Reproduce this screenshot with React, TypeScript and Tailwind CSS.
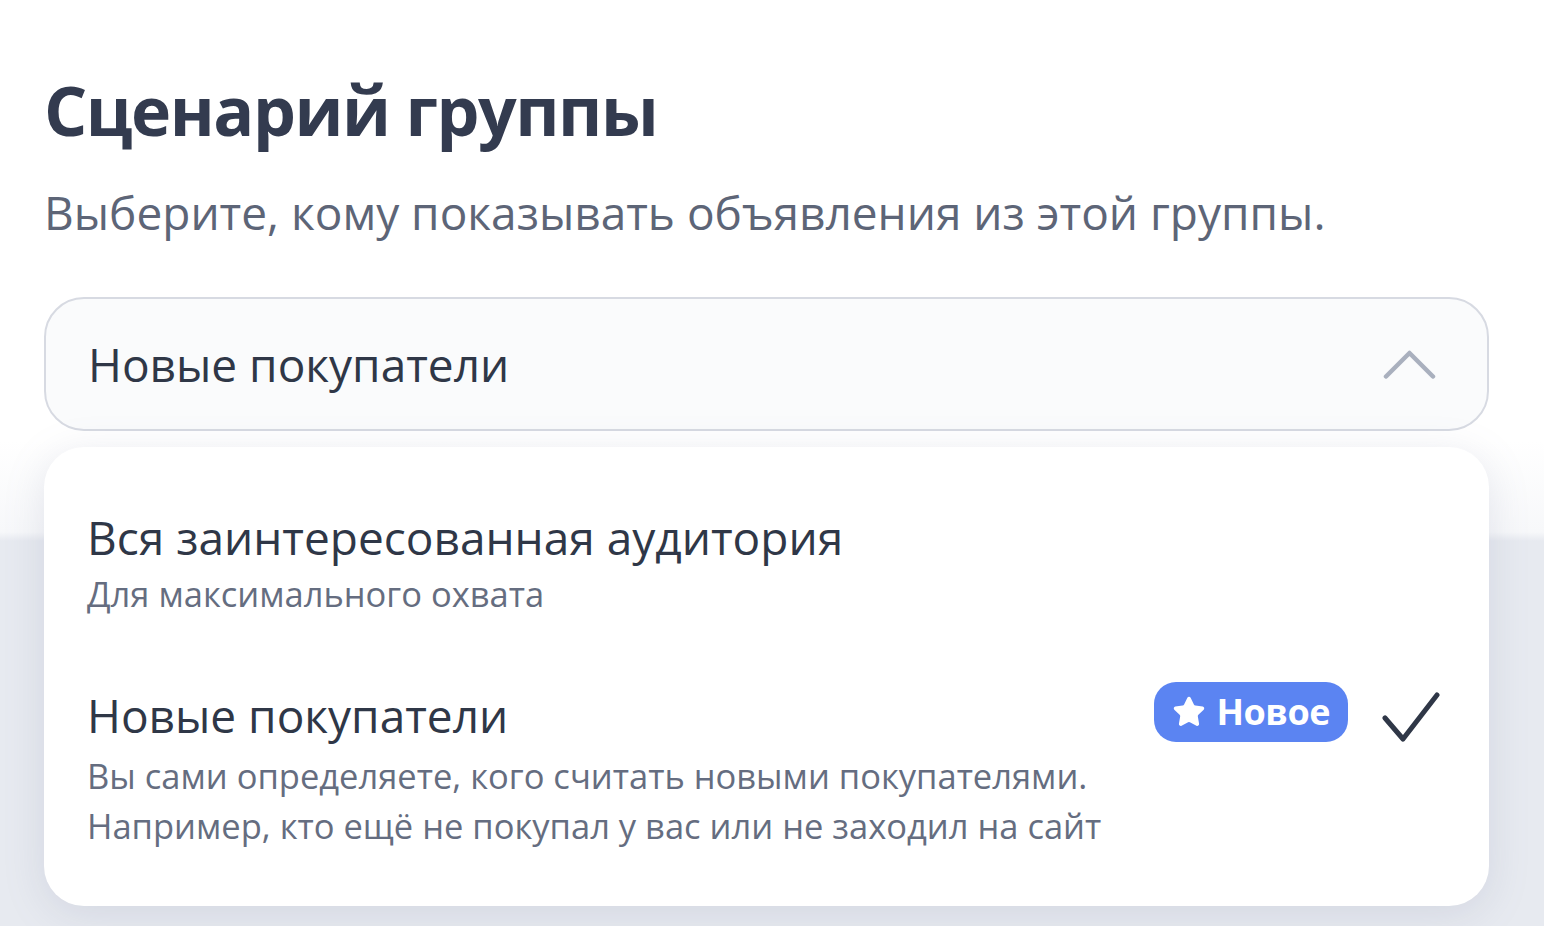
import { Star } from 'lucide-react';

const font = { fontFamily: '"Open Sans", "Noto Sans", sans-serif' };

function ChevronUp() {
  return (
    <svg width="53" height="31" viewBox="0 0 53 31" fill="none">
      <path d="M3 27.5L26.5 4L50 27.5" stroke="#a9b0be" strokeWidth="4.5" strokeLinecap="round" strokeLinejoin="round" />
    </svg>
  );
}

function Check() {
  return (
    <svg width="58" height="51" viewBox="0 0 58 51" fill="none">
      <path d="M3 26L21 47L55 3" stroke="#2f3747" strokeWidth="5" strokeLinecap="round" strokeLinejoin="round" />
    </svg>
  );
}

export default function App() {
  return (
    <div
      className="h-[926px] w-full overflow-hidden bg-[linear-gradient(to_bottom,#ffffff_0px,#ffffff_440px,#f7f8fa_532px,#e7eaf0_541px,#e7eaf0_100%)] pl-[44px] pr-[55px]"
      style={font}
    >
      <h1 className="pt-[68px] text-[68px] font-bold leading-[84px] tracking-[-1.5px] text-[#333b4f]">
        Сценарий группы
      </h1>
      <p className="mt-[30px] text-[46px] leading-[60px] text-[#5d6577]">
        Выберите, кому показывать объявления из этой группы.
      </p>

      {/* select */}
      <div className="mt-[55px] flex h-[134px] items-center justify-between rounded-[40px] border-2 border-[#d7dae2] bg-[#fafbfc] pl-[42px] pr-[51px]">
        <span className="text-[46px] leading-[60px] text-[#2f3747]">Новые покупатели</span>
        <ChevronUp />
      </div>

      {/* dropdown */}
      <div className="mt-[16px] rounded-[40px] bg-white pb-[55px] pl-[43px] pr-[49px] pt-[60px] shadow-[0_8px_40px_rgba(120,130,160,0.18)]">
        <div>
          <div className="text-[46px] leading-[60px] text-[#2f3747]">Вся заинтересованная аудитория</div>
          <div className="mt-[2px] text-[34.5px] leading-[50px] text-[#656d80]">Для максимального охвата</div>
        </div>
        <div className="mt-[66px] flex items-start justify-between">
          <div>
            <div className="text-[46px] leading-[60px] text-[#2f3747]">Новые покупатели</div>
            <div className="mt-[6px] text-[34.5px] leading-[50px] text-[#656d80]">
              Вы сами определяете, кого считать новыми покупателями.
              <br />
              Например, кто ещё не покупал у вас или не заходил на сайт
            </div>
          </div>
          <div className="-mt-[3px] flex items-start gap-[34px]">
            <span className="flex h-[60px] items-center gap-[10px] rounded-[22px] bg-[#5b84f2] pl-[18px] pr-[18px] text-[36px] font-bold tracking-[-0.5px] text-white">
              <Star size={34} fill="white" strokeWidth={1.5} />
              Новое
            </span>
            <div className="mt-[10px]">
              <Check />
            </div>
          </div>
        </div>
      </div>
    </div>
  );
}
